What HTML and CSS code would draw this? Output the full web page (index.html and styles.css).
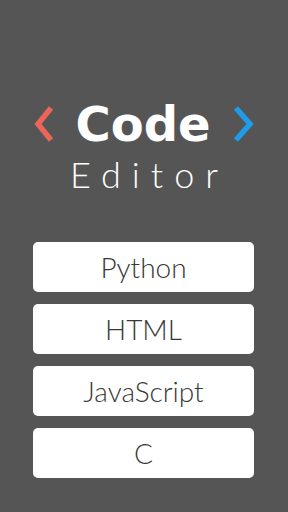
FILE: index.html
```html
<!DOCTYPE html>
<html lang="en">
<head>
  <meta charset="UTF-8">
  <meta name="viewport" content="width=device-width, initial-scale=1.0">
  <title>Code Editor</title>
  <link rel="stylesheet" href="styles.css">
</head>
<body>
  <div class="screen">
    <div class="logo">
      <div class="logo-top">
        <svg class="chevron" width="22" height="38" viewBox="0 0 22 38">
          <polyline points="18,3 5,19 18,35" fill="none" stroke="#ec6558" stroke-width="5.5"/>
        </svg>
        <span class="code">Code</span>
        <svg class="chevron" width="24" height="38" viewBox="0 0 24 38">
          <polyline points="5,3 19,19 5,35" fill="none" stroke="#1e9be9" stroke-width="5.5"/>
        </svg>
      </div>
      <div class="editor">Editor</div>
    </div>

    <div class="languages">
      <button class="lang">Python</button>
      <button class="lang">HTML</button>
      <button class="lang">JavaScript</button>
      <button class="lang">C</button>
    </div>
  </div>
</body>
</html>
```

FILE: styles.css
```css
body {
  margin: 0;
  padding: 0;
  background-color: #555555;
  font-family: "Lato", sans-serif;
}

.screen {
  width: 288px;
  height: 512px;
  display: flex;
  flex-direction: column;
}

.logo {
  padding-top: 98px;
  display: flex;
  flex-direction: column;
  align-items: center;
}

.logo-top {
  display: flex;
  align-items: center;
  gap: 20px;
  height: 52px;
}

.code {
  color: #ffffff;
  font-family: "DejaVu Sans", sans-serif;
  font-weight: 700;
  font-size: 48px;
  line-height: 52px;
}

.editor {
  color: #ffffff;
  font-weight: 300;
  font-size: 36px;
  letter-spacing: 11px;
  margin-left: 11px;
  line-height: 44px;
  margin-top: 2px;
}

.languages {
  margin-top: 46px;
  padding: 0 34px 0 33px;
  display: flex;
  flex-direction: column;
  gap: 12px;
}

.lang {
  height: 50px;
  border: none;
  border-radius: 5px;
  background-color: #ffffff;
  color: #383838;
  font-family: "Lato", sans-serif;
  font-weight: 300;
  font-size: 28px;
  padding: 0;
}
```
